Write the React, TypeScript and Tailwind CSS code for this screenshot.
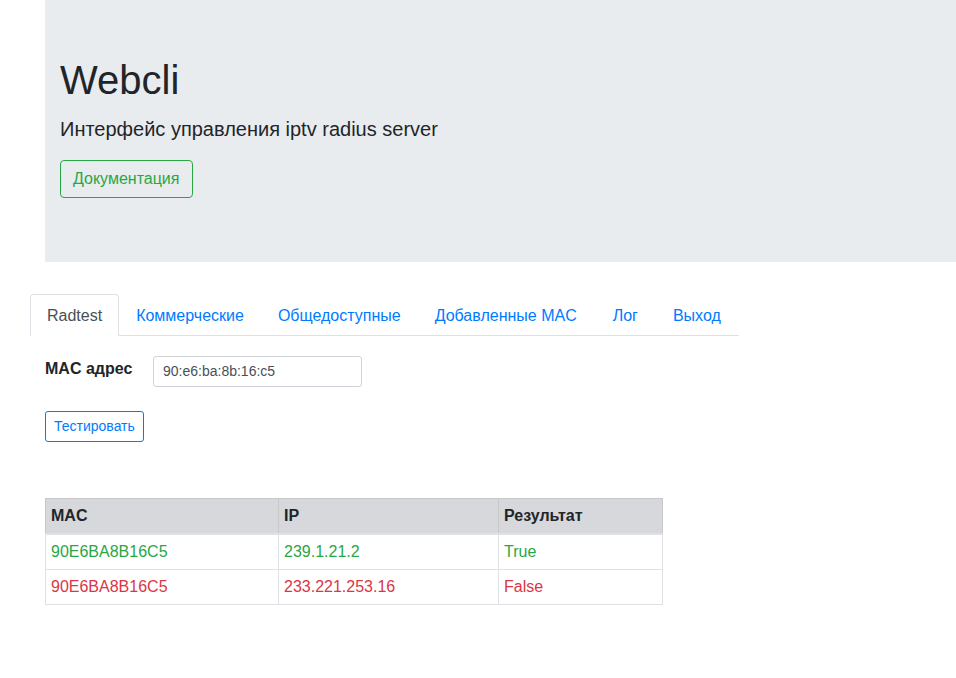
const tabs = [
  { label: "Коммерческие", cls: "px-4" },
  { label: "Общедоступные", cls: "px-4" },
  { label: "Добавленные MAC", cls: "pl-4 pr-[18px]" },
  { label: "Лог", cls: "pl-4 pr-[17px]" },
  { label: "Выход", cls: "px-4" },
];

export default function App() {
  return (
    <div className="min-h-[678px] bg-white text-[#212529]" style={{ fontFamily: '"Liberation Sans", Arial, sans-serif' }}>
      <div className="pl-[45px]">
        <div className="h-[262px] bg-[#e9ecef] pl-[15px] pt-[56px]">
          <h1 className="text-[40px] leading-[48px] font-normal">Webcli</h1>
          <p className="mt-[10px] text-[20px] leading-[30px]">Интерфейс управления iptv radius server</p>
          <button className="mt-[16px] h-[38px] rounded-[4px] border border-[#28a745] pl-3 pr-[13px] text-[16px] text-[#28a745]">
            Документация
          </button>
        </div>
      </div>

      <div className="pl-[30px] pt-[32px]">
        <div className="flex w-[709px] border-b border-[#dee2e6]">
          <div className="-mb-px rounded-t-[4px] border border-[#dee2e6] border-b-white bg-white px-4 pt-[9px] pb-[7px] leading-6 text-[#495057]">Radtest</div>
          {tabs.map((t) => (
            <div key={t.label} className={"-mb-px border border-transparent pt-[9px] pb-[7px] leading-6 text-[#007bff] " + t.cls}>{t.label}</div>
          ))}
        </div>
      </div>

      <div className="pl-[45px]">
        <div className="mt-[20px] flex items-start">
          <label className="w-[108px] pt-[1px] font-bold leading-6">MAC адрес</label>
          <div className="flex h-[31px] w-[209px] items-center rounded-[3px] border border-[#ced4da] pl-[9px] pr-[8px] text-[14px] text-[#495057]">
            90:e6:ba:8b:16:c5
          </div>
        </div>
        <button className="mt-[24px] h-[31px] rounded-[3px] border border-[#007bff] px-[8px] text-[14px] text-[#007bff]">
          Тестировать
        </button>

        <table className="mt-[56px] w-[618px] border-collapse text-[16px]">
          <thead>
            <tr className="bg-[#d6d8db]">
              <th className="w-[233px] border border-[#c6c8ca] border-b-2 border-b-[#dee2e6] px-[5px] py-[5px] text-left font-bold leading-6">MAC</th>
              <th className="w-[220px] border border-[#c6c8ca] border-b-2 border-b-[#dee2e6] px-[5px] py-[5px] text-left font-bold leading-6">IP</th>
              <th className="border border-[#c6c8ca] border-b-2 border-b-[#dee2e6] px-[5px] py-[5px] text-left font-bold leading-6">Результат</th>
            </tr>
          </thead>
          <tbody>
            <tr className="text-[#28a745]">
              <td className="border border-[#dee2e6] px-[5px] py-[5px] leading-6">90E6BA8B16C5</td>
              <td className="border border-[#dee2e6] px-[5px] py-[5px] leading-6">239.1.21.2</td>
              <td className="border border-[#dee2e6] px-[5px] py-[5px] leading-6">True</td>
            </tr>
            <tr className="text-[#dc3545]">
              <td className="border border-[#dee2e6] px-[5px] py-[5px] leading-6">90E6BA8B16C5</td>
              <td className="border border-[#dee2e6] px-[5px] py-[5px] leading-6">233.221.253.16</td>
              <td className="border border-[#dee2e6] px-[5px] py-[5px] leading-6">False</td>
            </tr>
          </tbody>
        </table>
      </div>
    </div>
  );
}
